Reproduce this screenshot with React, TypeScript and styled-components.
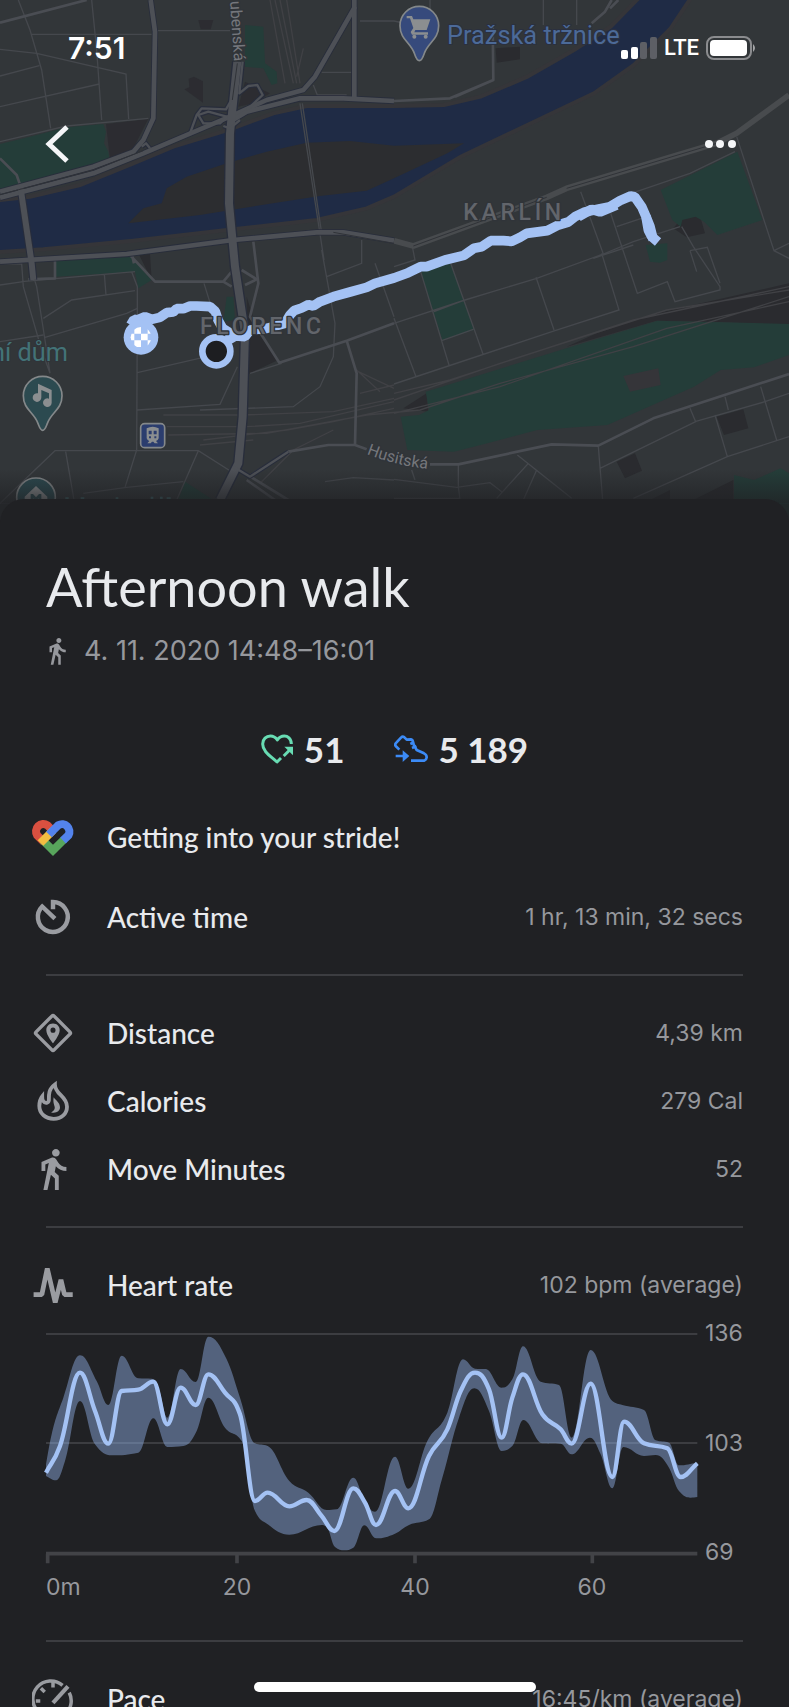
import React from "react";
import styled, { createGlobalStyle } from "styled-components";
import { MdDirectionsWalk } from "react-icons/md";

const GlobalStyle = createGlobalStyle`
  * { box-sizing: border-box; }
  html, body { margin: 0; background: #202124; }
  body { font-family: Inter, "Liberation Sans", sans-serif; color: #e8eaed; }
  h1, h2, p { margin: 0; }
`;

const color = {
  sheet: "#202124",
  line: "#3c3d41",
  text: "#e8eaed",
  muted: "#96989d",
  accent: "#a4c2f4",
};

const Screen = styled.main`
  position: relative;
  height: 100vh;
  overflow: hidden;
  background: ${color.sheet};
`;

const Hero = styled.header`
  position: relative;
  height: 499px;
`;

const MapLayer = styled.svg`
  position: absolute;
  top: 0;
  left: 0;
  width: 100%;
  height: 520px;
  display: block;
`;

const HeroContent = styled.div`
  position: relative;
  display: flex;
  flex-direction: column;
`;

const StatusBar = styled.div`
  display: flex;
  align-items: center;
  justify-content: space-between;
  height: 96px;
  padding: 0 32px 0 68px;
  color: #fff;
`;

const Clock = styled.time`
  font-size: 30px;
  line-height: 36px;
  font-weight: 600;
`;

const StatusIcons = styled.div`
  display: flex;
  align-items: center;
  gap: 7px;
  font-family: Roboto, "Liberation Sans", sans-serif;
  font-size: 22px;
  line-height: 24px;
  font-weight: 500;
`;

const NavBar = styled.nav`
  display: flex;
  align-items: center;
  justify-content: space-between;
  height: 96px;
  padding: 0 45px 0 34px;
`;

const IconButton = styled.button`
  display: grid;
  place-items: center;
  height: 48px;
  padding: 0;
  border: 0;
  background: none;
  color: #f5f6f8;
`;

const Sheet = styled.article`
  position: relative;
  border-radius: 24px 24px 0 0;
  background: ${color.sheet};
  padding: 56px 46px 0;
`;

const Title = styled.h1`
  font-family: Lato, "Liberation Sans", sans-serif;
  font-weight: 400;
  font-size: 54px;
  line-height: 64px;
`;

const Subtitle = styled.p`
  display: flex;
  align-items: center;
  gap: 12px;
  margin: 12px 0 0 -4px;
  font-size: 27px;
  line-height: 40px;
  color: ${color.muted};
`;

const Stats = styled.div`
  display: flex;
  justify-content: center;
  gap: 50px;
  padding: 50px 0 3px;
`;

const Stat = styled.div`
  display: flex;
  align-items: center;
  gap: 10px;
  font-family: Lato, "Liberation Sans", sans-serif;
  font-weight: 700;
  font-size: 35px;
  line-height: 56px;
`;

const Group = styled.section<{ $bottom?: number }>`
  padding: 23px 0 ${(p) => p.$bottom ?? 23}px;
  & + & {
    border-top: 2px solid ${color.line};
  }
`;

const Row = styled.div<{ $after?: number }>`
  display: flex;
  align-items: center;
  height: 68px;
  margin-left: -17px;
  margin-bottom: ${(p) => p.$after ?? 0}px;
`;

const RowIcon = styled.span`
  flex: none;
  display: grid;
  place-items: center;
  width: 48px;
  height: 48px;
  margin-right: 30px;
  color: #9a9ca1;
`;

const Label = styled.h2`
  flex: 1;
  font-family: Lato, "Liberation Sans", sans-serif;
  font-weight: 500;
  font-size: 28px;
  line-height: 36px;
`;

const Value = styled.span`
  font-size: 23px;
  line-height: 36px;
  color: ${color.muted};
`;

const Chart = styled.svg`
  display: block;
  width: 100%;
  height: auto;
  margin-top: 2px;
  overflow: visible;
`;

const HomeIndicator = styled.div`
  position: absolute;
  left: 50%;
  bottom: 15px;
  width: 282px;
  height: 10px;
  margin-left: -141px;
  border-radius: 5px;
  background: #fff;
`;

type Point = [number, number];

/** Limited cubic interpolation: rounded peaks that never overshoot the data. */
function smooth(points: Point[], start = "M"): string {
  const n = points.length;
  const slope: number[] = [];
  for (let i = 0; i < n - 1; i++) {
    slope.push((points[i + 1][1] - points[i][1]) / (points[i + 1][0] - points[i][0]));
  }
  const tangent = points.map((_, i) => {
    if (i === 0) return slope[0];
    if (i === n - 1) return slope[n - 2];
    const a = slope[i - 1];
    const b = slope[i];
    if (a * b <= 0) return 0;
    return Math.sign(a) * Math.min(2 * Math.abs(a), 2 * Math.abs(b), Math.abs(a + b) / 2);
  });
  let d = `${start}${points[0][0]} ${points[0][1]}`;
  for (let i = 0; i < n - 1; i++) {
    const [x0, y0] = points[i];
    const [x1, y1] = points[i + 1];
    const h = (x1 - x0) * 0.4;
    d += `C${x0 + h} ${y0 + h * tangent[i]} ${x1 - h} ${y1 - h * tangent[i + 1]} ${x1} ${y1}`;
  }
  return d;
}

const average: Point[] = [
  [138, 485], [180, 405], [240, 185], [285, 300], [325, 398], [365, 240], [415, 236], [460, 212],
  [502, 340], [542, 230], [587, 282], [625, 190], [675, 245], [720, 310], [765, 570], [803, 545],
  [868, 586], [920, 567], [965, 615], [1003, 660], [1060, 532], [1095, 575], [1128, 642], [1185, 540],
  [1225, 592], [1287, 435], [1342, 355], [1382, 240], [1425, 185], [1467, 235], [1505, 380],
  [1537, 260], [1569, 190], [1627, 310], [1682, 355], [1715, 398], [1772, 218], [1837, 498],
  [1872, 332], [1932, 397], [2002, 412], [2042, 498], [2092, 457],
];
const upper: Point[] = [
  [138, 460], [155, 370], [190, 260], [240, 133], [290, 210], [325, 282], [365, 134], [415, 202],
  [455, 203], [478, 240], [502, 320], [542, 174], [587, 213], [625, 77], [680, 145], [720, 260],
  [765, 397], [803, 405], [868, 510], [925, 545], [980, 597], [1010, 595], [1060, 500], [1095, 572],
  [1125, 602], [1185, 437], [1225, 533], [1282, 390], [1342, 305], [1389, 145], [1425, 173],
  [1457, 174], [1505, 230], [1537, 205], [1569, 106], [1622, 212], [1677, 222], [1715, 380],
  [1772, 117], [1837, 270], [1867, 282], [1932, 297], [1967, 388], [2007, 395], [2037, 463], [2092, 455],
];
const lower: Point[] = [
  [138, 495], [168, 508], [195, 450], [240, 270], [285, 400], [335, 433], [415, 425], [460, 322],
  [502, 408], [550, 405], [590, 360], [625, 260], [675, 350], [725, 390], [765, 600], [803, 640],
  [868, 671], [965, 642], [980, 648], [1005, 708], [1033, 718], [1060, 710], [1093, 643], [1128, 682], [1185, 668],
  [1227, 642], [1287, 625], [1327, 500], [1377, 320], [1423, 232], [1467, 300], [1505, 420],
  [1537, 405], [1570, 327], [1627, 397], [1682, 398], [1715, 430], [1770, 380], [1802, 430],
  [1837, 532], [1870, 408], [1932, 435], [1967, 432], [2007, 470], [2037, 540], [2072, 560], [2092, 558],
];

function HeartRateChart() {
  const band = `${smooth(upper)}${smooth([...lower].reverse(), "L")}Z`;
  return (
    <Chart viewBox="0 0 697 278" role="img" aria-label="Heart rate over 72 minutes">
      <g transform="translate(-46 -10) scale(.33333)">
        <path d="M138 69H2092M138 396H2092" stroke={color.line} strokeWidth="6" />
        <path d={band} fill="#8fb0e6" fillOpacity=".46" />
        <path d="M138 728H2092M143 728V757M711 728V757M1245 728V757M1777 728V757" stroke="#424347" strokeWidth="11" fill="none" />
        <path d={smooth(average)} fill="none" stroke={color.accent} strokeWidth="13" />
      </g>
      <g fill={color.muted} fontSize="23">
        <text x="659" y="20">136</text>
        <text x="659" y="130">103</text>
        <text x="659" y="239">69</text>
        <text x="0" y="274">0m</text>
        <g textAnchor="middle">
          <text x="191" y="274">20</text>
          <text x="369" y="274">40</text>
          <text x="546" y="274">60</text>
        </g>
      </g>
    </Chart>
  );
}

function CityMap() {
  return (
    <MapLayer viewBox="0 0 2367 1560" preserveAspectRatio="xMidYMid slice" aria-hidden="true">
      <defs>
        <linearGradient id="fade" x1="0" x2="0" y1="0" y2="1">
          <stop offset="0" stopColor="#202124" stopOpacity="0" />
          <stop offset="1" stopColor="#202124" stopOpacity=".75" />
        </linearGradient>
        <path id="husitska" d="M1100 1362Q1190 1398 1300 1409" />
      </defs>
      <rect width="2367" height="1560" fill="#323639" />

      {/* buildings and rail yards */}
      <g fill="#2a2b2f">
        <path d="M595 60H640L632 88H602ZM553 268L568 262L566 236L582 230L609 244V308ZM735 245L810 280L760 310L715 320ZM318 372L445 357L400 445L330 480Z" opacity=".8" />
        <path d="M1487 145L1560 140L1560 178L1490 188ZM2020 685L2045 655L2100 648L2115 700L2060 712ZM2150 1250L2230 1228L2245 1285L2172 1305ZM1850 1385L1905 1360L1926 1412L1875 1435Z" />
        <path d="M1790 1000L1960 942L2367 850V975L2160 966L1970 962L1700 1040ZM1210 1225L1280 1180L1285 1235ZM415 760L450 762L455 840ZM740 890L775 1000L835 1080L745 1122Z" />
        <path d="M2080 1500L2200 1440V1500ZM1950 1500L2010 1470V1500Z" />
      </g>

      {/* river with its island */}
      <path d="M-20 602L90 590L240 555L400 490L520 440L690 388L820 340L920 318H1182L1332 315L1442 290L1582 230L1722 150L1832 80L1930 -20H2082L2012 85L1902 195L1782 280L1582 375L1382 470L1182 590L1100 625L950 660L700 688L400 722L130 748L-20 757Z" fill="#1f2b45" stroke="#353539" strokeWidth="12" />
      <path d="M385 670L430 625L485 610L500 565L560 530L680 490L800 455L920 428L1050 423L1182 437L1392 430L1342 460L1182 535L1100 572L960 588L800 613L600 645Z" fill="#2c2d30" />

      {/* parks */}
      <g fill="#243d39">
        <path d="M0 432L90 410L200 382L310 372L318 395L312 430L325 455L330 485L150 535L0 568Z" />
        <path d="M735 75L790 80L795 190L830 215L832 250L815 255L790 205L735 200Z" />
        <path d="M165 780L385 760L400 780L455 840L415 865L405 815L165 830ZM680 890H700L705 960L670 965Z" />
        <path d="M1982 570L2212 455L2287 660L2152 705L2112 665L2087 650L2047 660L2042 680L2017 660ZM1937 735L2002 730V780L1980 788L1950 785Z" />
        <path d="M1262 815L1352 790L1422 990L1327 1020Z" />
        <path d="M1202 1250L1257 1245L1287 1230L1277 1175L1682 1050L1972 962L2367 972V1065L2262 1102L2162 1110L2082 1160L1822 1275L1612 1290L1462 1330L1362 1355L1222 1350Z" />
        <path d="M2202 1425L2262 1440L2342 1405L2367 1420V1545L2202 1500ZM535 1500L555 1445L640 1500Z" />
      </g>
      <path d="M1870 1128L1975 1105L1982 1155L1890 1175Z" fill="#353539" />

      {/* minor streets */}
      <g fill="none" stroke="#45484d" strokeWidth="4">
        <path d="M55 0L90 90L125 210L152 385M275 0L290 150L305 360M95 103H455M470 92H690M0 148L110 160L378 222L386 357M0 228L118 197M0 320L298 252M0 425L200 378L445 355" />
        <path d="M1080 63H1182L1260 80M940 255L952 285H1040M965 217H1055M900 310L972 780M907 310L965 700M1085 720V790L980 830M965 750L1005 970L1000 1070L960 1160L880 1220L600 1230" />
        <path d="M1290 0V80M1630 0V75M1730 0V75" />
        <path d="M0 790L65 792L70 860L125 1050L150 1120M0 855L70 845M85 780L110 860L135 1020L150 1120M65 845L405 815M395 815L412 860V930L410 1350L375 1462M313 822L318 885M130 955L215 900L405 872M135 1012L380 940L412 925M0 1025L130 1005M412 1118L620 1070M412 1230L660 1213L712 1100M612 850L640 940" />
        <path d="M0 1510L165 1352H595L710 1425M197 1355L222 1500M595 1352L530 1500M250 1480L380 1462L550 1445M975 1445L1060 1433L1182 1440M750 1120L845 1090M1125 790L1182 950" />
        <path d="M1182 970L1395 900L1610 835L1810 762L1900 725L2040 680M1182 955L1248 1130M1182 1152L1345 1098L1665 992L1857 930L1805 760M1262 815L1347 1095M1352 790L1450 1065M1302 935L1395 900M1325 1022L1420 988M1608 832L1662 990M1742 575L1810 762M1832 640L1912 880L2002 845L2025 905L2160 870V860L2080 740L2045 680M1850 680L1940 650M1780 775L1900 735M2070 752L2122 742L2160 850M2070 752L2090 815M2210 410L2322 752L2367 775M2322 752L2367 730M2205 455L2070 520L1850 595" />
        <path d="M1237 740L1245 780L1182 800" />
        <path d="M2070 1225L2087 1265L1800 1405M2175 1190L2185 1230M2085 1265L2295 1205L2367 1180M2282 1160L2330 1320M2145 1245L2182 1370M1900 1495L2182 1370L2367 1310M1795 1340L1808 1500M1552 1365L1715 1495M1585 1390L1490 1495M1610 1410L1570 1500M1375 1395V1460L1380 1500M1182 1438L1370 1462L1470 1448L1505 1475M1182 1495H1380M1235 1410L1245 1440" />
      </g>

      {/* railway */}
      <g fill="none" stroke="#404145" strokeWidth="4">
        <path d="M810 0L855 250M825 0L880 250M840 0L890 250M860 0L900 250M910 145L890 230" />
        <path d="M490 1245H730L1000 1235L1182 1195M500 1280H740L900 1270L1182 1205M505 1305L800 1300L1100 1245L1260 1230L1500 1150L1900 1040L2367 890M610 1320L860 1290L1000 1265L1182 1225M1182 1200L1500 1090L2000 930L2367 870M1182 1240L1500 1160L2000 985L2367 905M600 1335L760 1320M1182 1180L1350 1140L1900 960L2367 860M1075 1115L1182 1165M1080 1180L1182 1155M1070 1110L1140 1175M780 1450L880 1350L1000 1290" />
      </g>

      {/* secondary roads */}
      <g fill="none" stroke="#4a4d53" strokeWidth="8" strokeLinejoin="round">
        <path d="M0 68L260 0M0 475L50 525L62 560M165 780V835L85 838" />
        <path d="M385 760L465 845H670L695 815M395 760L402 790M760 725L775 850L750 950L838 1088L1040 1022L1182 970M1040 1022L1070 1120L1065 1335L985 1335L865 1355L745 1430M1065 1335L1100 1348M1290 1393H1375L1655 1333L1795 1337L1960 1255L2367 1122" />
        <path d="M1478 75L1480 240L1350 295L1182 303M1480 240L1365 290M1835 0L1815 35L1775 70M1855 0L1830 25" />
        <path d="M725 810L770 838L735 855M670 845L695 860M735 1420L865 1500M740 1440L825 1500" />
      </g>
      <path d="M1182 722L1240 738L1640 592L1700 565L2150 430L2210 400L2367 285" fill="none" stroke="#484b4e" strokeWidth="17" strokeLinejoin="round" />

      {/* arterial roads, drawn with a dark casing */}
      <g fill="none" strokeLinejoin="round">
        {[
          ["#282d3b", 1],
          ["#4d5056", 0],
        ].map(([stroke, casing]) => (
          <g key={stroke} stroke={stroke as string}>
            <g strokeWidth={casing ? 19 : 14}>
              <path d="M452 0L465 95L460 355L430 420L400 455L280 500L0 575" />
              <path d="M0 593L280 520L430 460L690 350L800 300L910 270L945 230L1065 20" />
              <path d="M690 365L740 335L900 295H1030L1182 303M1063 0V290" />
              <path d="M0 785L380 762L700 720L950 697H1030L1182 722" />
            </g>
            <g strokeWidth={casing ? 32 : 24}>
              <path d="M62 565L95 790L100 840" strokeWidth={casing ? 24 : 18} />
              <path d="M712 185L700 300L690 400L687 610L705 800L735 1000L728 1250L715 1390L660 1500" />
            </g>
            <g strokeWidth={casing ? 14 : 7}>
              <path d="M728 185L718 280L745 258L772 255L788 285L740 330M570 400L590 345L605 325L678 328L700 290M595 345L625 335L680 350L660 370H610ZM670 378L690 385L720 360M425 440L438 430L450 445" />
              <path d="M700 1400L750 1430L865 1355" />
            </g>
          </g>
        ))}
        <path d="M0 584L280 510L430 452M712 190L697 300M1240 738L1640 592M1700 565L2150 430M1000 697L1182 730" stroke="#303338" strokeWidth="3" />
      </g>

      {/* recorded route */}
      <g fill="none" stroke={color.accent} strokeWidth="29" strokeLinejoin="bevel">
        <path d="M392 975L402 958L412 960L435 950L455 958L480 952L500 938L520 936L530 926L550 926L570 918L590 918L630 920L646 934L654 960L668 985L705 1008" />
        <path d="M660 1035L705 1008L735 1010L750 990L800 985L855 970L870 945L882 932L905 924L925 914L940 918L960 905L1000 890L1050 876L1100 862L1125 850L1182 834L1225 818L1262 800L1280 800L1335 780L1392 766L1422 745L1445 740L1472 722L1510 722L1535 724L1560 712L1580 700L1642 692L1675 675L1705 666L1725 650L1755 636L1800 626L1830 620L1860 602L1892 588L1904 590L1926 622L1938 650L1945 690L1955 710L1974 726" />
        <path d="M1735 650L1775 628L1800 636L1850 615M1938 650L1950 680L1960 720" />
      </g>
      <circle cx="423" cy="1012" r="52" fill={color.accent} />
      <clipPath id="flag"><circle cx="423" cy="1012" r="31" /></clipPath>
      <path d="M403 981H423V1001H403ZM443 981H463V1001H443ZM383 1001H403V1021H383ZM423 1001H443V1021H423ZM403 1021H423V1041H403ZM443 1021H463V1041H443Z" fill="#fff" clipPath="url(#flag)" />
      <circle cx="649" cy="1054" r="42" fill="#1d1e21" stroke={color.accent} strokeWidth="20" />

      {/* place names */}
      <g fontFamily="Roboto, sans-serif" paintOrder="stroke" strokeLinejoin="round">
        <g fill="#62656b" stroke="#303439" strokeWidth="8" fontSize="69" fontWeight="500" letterSpacing="11">
          <text x="1390" y="660">KARLÍN</text>
          <text x="600" y="1001">FLORENC</text>
        </g>
        <text x="1341" y="132" fontSize="76" fill="#4c6a98" stroke="#2a3040" strokeWidth="6">Pražská tržnice</text>
        <text x="204" y="1083" fontSize="76" fill="#437377" stroke="#303439" strokeWidth="6" textAnchor="end">ní dům</text>
        <g fill="#75777c" stroke="#303439" strokeWidth="8" fontSize="48">
          <text><textPath href="#husitska">Husitská</textPath></text>
          <text transform="translate(690 4) rotate(86)">ubenská</text>
        </g>
      </g>

      {/* place pins */}
      <g stroke="#84888a" strokeWidth="5">
        <path d="M1258 182C1250 182 1247 172 1243 160C1232 128 1200 118 1200 77A58 58 0 0 1 1316 77C1316 118 1284 128 1273 160C1269 172 1266 182 1258 182Z" fill="#364a7c" />
        <path d="M128 1291C120 1291 118 1280 113 1268C101 1236 70 1228 70 1187A58 58 0 0 1 186 1187C186 1228 155 1236 143 1268C138 1280 136 1291 128 1291Z" fill="#2c4a50" />
        <circle cx="108" cy="1492" r="58" fill="#2c4a50" />
        <rect x="422" y="1271" width="72" height="72" rx="12" fill="#2b3d6e" />
      </g>
      <g fill="#8b8e90">
        <path d="M1220 48H1236L1240 58H1291L1280 90H1246L1243 97H1284V104H1236L1232 96L1240 84L1230 55H1220Z" />
        <circle cx="1243" cy="110" r="6" />
        <circle cx="1277" cy="110" r="6" />
        <path d="M114 1151L155 1170V1208A13 13 0 1 1 147 1196V1180L124 1170V1192A13 13 0 1 1 114 1180Z" />
        <path d="M74 1490L108 1458L142 1490V1498H132V1520H84V1498H74ZM92 1482V1515H99V1495L108 1504L117 1495V1515H124V1482H117L108 1492L99 1482Z" fillRule="evenodd" />
        <path d="M440 1285Q458 1276 476 1285V1315Q474 1322 468 1323L474 1330H464L460 1325H456L452 1330H442L448 1323Q442 1322 440 1315ZM446 1292V1303H455V1292ZM461 1292V1303H470V1292ZM447 1309V1315H453V1309ZM463 1309V1315H469V1309Z" fillRule="evenodd" />
      </g>
      <path d="M196 1492H206V1500H196ZM242 1492H253V1500H242ZM347 1492H355V1500H347ZM452 1490H460V1500H452ZM480 1490H488V1500H480ZM500 1492H512V1500H500Z" fill="#437377" opacity=".8" />
      <rect y="1410" width="2367" height="100" fill="url(#fade)" />
      <rect y="1510" width="2367" height="60" fill="#202124" fillOpacity=".75" />
    </MapLayer>
  );
}

function SignalIcon() {
  return (
    <svg width="36" height="24" viewBox="0 0 36 24" aria-label="Signal: two of four bars">
      <rect x="0" y="14" width="7" height="9" rx="2" fill="#fff" />
      <rect x="10" y="11" width="7" height="12" rx="2" fill="#fff" />
      <rect x="19" y="6" width="7" height="17" rx="2" fill="#5d5f65" />
      <rect x="29" y="1" width="7" height="22" rx="2" fill="#5d5f65" />
    </svg>
  );
}

function BatteryIcon() {
  return (
    <svg width="51" height="24" viewBox="0 0 51 24" aria-label="Battery full">
      <rect x="1" y="1" width="44" height="22" rx="7" fill="none" stroke="#8b8c8f" strokeWidth="2" />
      <rect x="4" y="4" width="37" height="16" rx="4" fill="#fff" />
      <path d="M47 8Q51 12 47 16Z" fill="#a5a6a8" />
    </svg>
  );
}

function HeartPointsIcon() {
  return (
    <svg width="33" height="30" viewBox="41 31 99 90" aria-hidden="true">
      <g fill="none" stroke="#68dcb3" strokeWidth="9" strokeLinejoin="round">
        <path d="M132 61C132 44 120 37 111 37C101 37 94 43 90 49C86 43 79 37 69 37C57 37 46 46 46 61C46 83 68 96 89 115L101 103" />
        <path d="M109 97L127 79" />
      </g>
      <path d="M111 69H137V95Z" fill="#68dcb3" />
    </svg>
  );
}

function StepsIcon() {
  return (
    <svg width="34" height="30" viewBox="429 34 102 88" aria-hidden="true">
      <g fill="none" stroke="#3c8bf6" strokeWidth="8" strokeLinejoin="round">
        <path d="M445 80L434 69C431 65 433 62 436 59L450 44C454 40 458 40 461 44L467 50L480 49C487 50 486 58 488 65L497 81L519 91C529 96 530 108 520 113H480" />
        <path d="M478 63L489 58M483 75L496 69M434 99H460" />
      </g>
      <path d="M455 82L475 99L455 117Z" fill="#3c8bf6" />
    </svg>
  );
}

function FitLogo() {
  return (
    <svg width="44" height="38" viewBox="0 0 44 38" fill="none" strokeWidth="8" aria-hidden="true">
      <path d="M20 11L16.500 7.300A7.400 7.400 0 0 0 6.200 17.500L13 24" stroke="#d95040" />
      <path d="M12 22.500L22 32.300L33 21.500" stroke="#58a55c" />
      <path d="M22 12.500L9.500 25" stroke="#f2bd42" />
      <path d="M32 22.500L37.500 17.200A7.400 7.400 0 0 0 27.300 7.200L18 16.500" stroke="#5383ec" />
    </svg>
  );
}

const glyph = { width: 42, height: 42, viewBox: "0 0 132 132", fill: "none", stroke: "currentColor", "aria-hidden": true } as const;

function TimerIcon() {
  return (
    <svg {...glyph} strokeWidth="14">
      <path d="M66 42V19A47 47 0 1 1 32 33L72 71" />
    </svg>
  );
}

function DistanceIcon() {
  return (
    <svg {...glyph} strokeWidth="11">
      <rect x="26" y="26" width="80" height="80" rx="5" transform="rotate(45 66 66)" />
      <path d="M66 36C53 36 45 45 45 57C45 73 66 98 66 98S87 73 87 57C87 45 79 36 66 36ZM66 49A8 8 0 1 1 66 65A8 8 0 1 1 66 49Z" fill="currentColor" stroke="none" fillRule="evenodd" />
    </svg>
  );
}

function FlameIcon() {
  return (
    <svg {...glyph} strokeWidth="12">
      <path d="M72 14C52 28 53 46 53 64C52 72 42 76 35 66C32 62 32 57 32 52C24 62 23 72 23 82C23 106 43 122 68 122C93 122 110 106 110 84C110 50 72 46 72 14Z" />
      <path d="M68 54C73 62 88 70 88 86C88 98 76 106 60 102C70 96 74 90 70 80C68 73 66 66 68 54Z" fill="currentColor" stroke="none" />
    </svg>
  );
}

function PulseIcon() {
  return (
    <svg {...glyph} strokeWidth="15" strokeLinejoin="bevel">
      <path d="M5 96H31L48 14L73 121L91 50L102 96H128" />
    </svg>
  );
}

function PaceIcon() {
  return (
    <svg {...glyph} strokeWidth="11">
      <path d="M96 23A56 56 0 0 0 22 108H110A56 56 0 0 0 117 46" />
      <path d="M66 78L113 26" strokeWidth="13" />
      <path d="M66 12V30M28 32L40 44M12 72H26" />
    </svg>
  );
}

interface MetricProps {
  icon: React.ReactNode;
  label: string;
  value?: string;
  after?: number;
}

function Metric({ icon, label, value, after }: MetricProps) {
  return (
    <Row $after={after}>
      <RowIcon>{icon}</RowIcon>
      <Label>{label}</Label>
      {value && <Value>{value}</Value>}
    </Row>
  );
}

export default function App() {
  return (
    <Screen>
      <GlobalStyle />
      <Hero>
        <CityMap />
        <HeroContent>
          <StatusBar>
            <Clock>7:51</Clock>
            <StatusIcons>
              <SignalIcon />
              LTE
              <BatteryIcon />
            </StatusIcons>
          </StatusBar>
          <NavBar>
            <IconButton aria-label="Back">
              <svg width="48" height="40" viewBox="0 0 48 40" fill="none" stroke="currentColor" strokeWidth="5">
                <path d="M33 3L15 20L33 37" />
              </svg>
            </IconButton>
            <IconButton aria-label="More options">
              <svg width="48" height="12" viewBox="0 0 48 12" fill="currentColor">
                <circle cx="13" cy="6" r="4" />
                <circle cx="24" cy="6" r="4" />
                <circle cx="36" cy="6" r="4" />
              </svg>
            </IconButton>
          </NavBar>
        </HeroContent>
      </Hero>

      <Sheet>
        <Title>Afternoon walk</Title>
        <Subtitle>
          <MdDirectionsWalk size={30} aria-hidden="true" />
          4. 11. 2020 14:48–16:01
        </Subtitle>
        <Stats>
          <Stat>
            <HeartPointsIcon />
            51
          </Stat>
          <Stat>
            <StepsIcon />
            5 189
          </Stat>
        </Stats>

        <Group>
          <Metric icon={<FitLogo />} label="Getting into your stride!" after={12} />
          <Metric icon={<TimerIcon />} label="Active time" value="1 hr, 13 min, 32 secs" />
        </Group>
        <Group>
          <Metric icon={<DistanceIcon />} label="Distance" value="4,39 km" />
          <Metric icon={<FlameIcon />} label="Calories" value="279 Cal" />
          <Metric icon={<MdDirectionsWalk size={46} />} label="Move Minutes" value="52" />
        </Group>
        <Group $bottom={41}>
          <Metric icon={<PulseIcon />} label="Heart rate" value="102 bpm (average)" />
          <HeartRateChart />
        </Group>
        <Group>
          <Metric icon={<PaceIcon />} label="Pace" value="16:45/km (average)" />
        </Group>
      </Sheet>
      <HomeIndicator />
    </Screen>
  );
}
